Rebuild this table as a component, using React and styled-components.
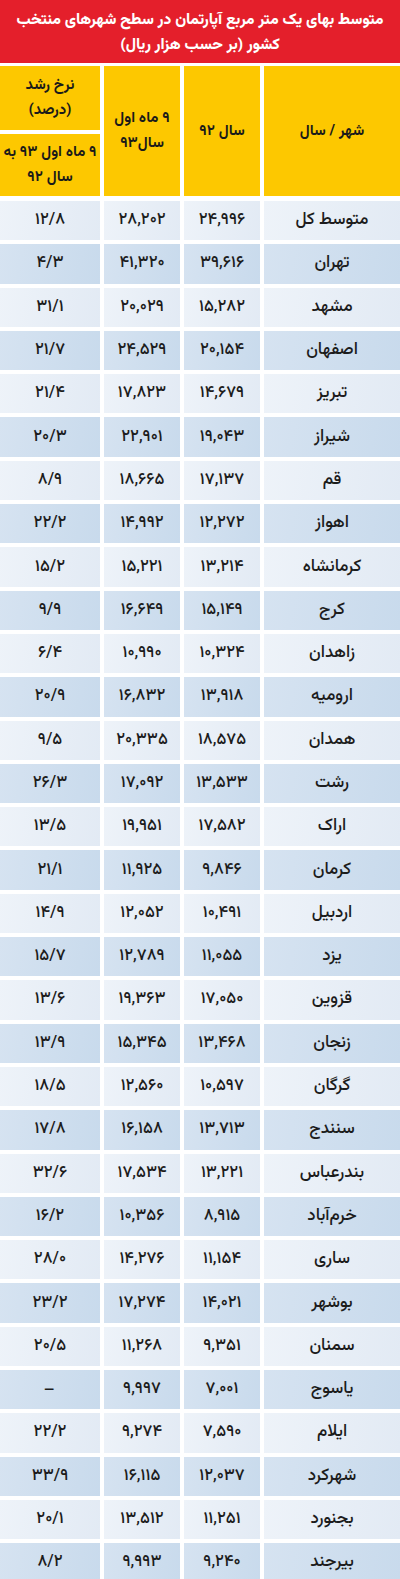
import React from "react";
import styled, { createGlobalStyle } from "styled-components";

const GlobalStyle = createGlobalStyle`
  html, body { margin: 0; padding: 0; background: #ffffff; }
  body { font-family: "Vazirmatn", "Noto Sans Arabic", "DejaVu Sans", sans-serif; }
`;

const toFa = (s) => s.replace(/[0-9]/g, (d) => "۰۱۲۳۴۵۶۷۸۹"[d]);

const rows = [
  ["متوسط کل", "24,996", "28,202", "12/8"],
  ["تهران", "39,616", "41,320", "4/3"],
  ["مشهد", "15,282", "20,029", "31/1"],
  ["اصفهان", "20,154", "24,529", "21/7"],
  ["تبریز", "14,679", "17,823", "21/4"],
  ["شیراز", "19,043", "22,901", "20/3"],
  ["قم", "17,137", "18,665", "8/9"],
  ["اهواز", "12,272", "14,992", "22/2"],
  ["کرمانشاه", "13,214", "15,221", "15/2"],
  ["کرج", "15,149", "16,649", "9/9"],
  ["زاهدان", "10,324", "10,990", "6/4"],
  ["ارومیه", "13,918", "16,832", "20/9"],
  ["همدان", "18,575", "20,335", "9/5"],
  ["رشت", "13,533", "17,092", "26/3"],
  ["اراک", "17,582", "19,951", "13/5"],
  ["کرمان", "9,846", "11,925", "21/1"],
  ["اردبیل", "10,491", "12,052", "14/9"],
  ["یزد", "11,055", "12,789", "15/7"],
  ["قزوین", "17,050", "19,363", "13/6"],
  ["زنجان", "13,468", "15,345", "13/9"],
  ["گرگان", "10,597", "12,560", "18/5"],
  ["سنندج", "13,713", "16,158", "17/8"],
  ["بندرعباس", "13,221", "17,534", "32/6"],
  ["خرم‌آباد", "8,915", "10,356", "16/2"],
  ["ساری", "11,154", "14,276", "28/0"],
  ["بوشهر", "14,021", "17,274", "23/2"],
  ["سمنان", "9,351", "11,268", "20/5"],
  ["یاسوج", "7,001", "9,997", "–"],
  ["ایلام", "7,590", "9,274", "22/2"],
  ["شهرکرد", "12,037", "16,115", "33/9"],
  ["بجنورد", "11,251", "13,512", "20/1"],
  ["بیرجند", "9,240", "9,993", "8/2"],
];

const Page = styled.div`
  width: 400px;
  direction: rtl;
  background: #ffffff;
  display: flex;
  flex-direction: column;
  gap: 3px;
`;

const TitleBar = styled.div`
  height: 63px;
  background: #e41f2b;
  color: #ffffff;
  font-weight: 800;
  font-size: 15.5px;
  line-height: 25px;
  text-align: center;
  white-space: nowrap;
  display: flex;
  flex-direction: column;
  justify-content: center;
  padding-top: 2px;
  box-sizing: border-box;
`;

const Grid = styled.div`
  display: grid;
  grid-template-columns: 136px 76px 76px 100px;
  column-gap: 4px;
`;

const Header = styled(Grid)`
  grid-template-rows: 64px 62px;
  row-gap: 4px;
  margin-bottom: 2px;
`;

const HeadCell = styled.div`
  background: #fdc800;
  color: #1a1a1a;
  font-weight: 700;
  font-size: 15px;
  line-height: 25px;
  text-align: center;
  white-space: nowrap;
  display: flex;
  align-items: center;
  justify-content: center;
  grid-row: ${(p) => (p.$span ? "1 / span 2" : "auto")};
  grid-column: ${(p) => p.$col || "auto"};
`;

const Body = styled(Grid)`
  grid-auto-rows: 39.3px;
  row-gap: 4px;
`;

const Cell = styled.div`
  display: flex;
  align-items: center;
  justify-content: center;
  color: #1c1c1c;
  font-size: ${(p) => (p.$num ? "16.5px" : "17px")};
  font-weight: 500;
  letter-spacing: ${(p) => (p.$num ? "1.8px" : "0")};
  background: ${(p) =>
    p.$dark
      ? "linear-gradient(100deg, #d6e3f1 0%, #c8daec 100%)"
      : "linear-gradient(100deg, #eef3f9 0%, #e2eaf4 100%)"};
  padding-bottom: 1px;
  box-sizing: border-box;
`;

const Num = styled.span`
  direction: ltr;
  unicode-bidi: isolate;
`;

export default function App() {
  return (
    <>
      <GlobalStyle />
      <Page>
        <TitleBar>
          <div>متوسط بهای یک متر مربع آپارتمان در سطح شهرهای منتخب</div>
          <div>کشور (بر حسب هزار ریال)</div>
        </TitleBar>
        <Header>
          <HeadCell $span>شهر / سال</HeadCell>
          <HeadCell $span>سال ۹۲</HeadCell>
          <HeadCell $span>
            ۹ ماه اول
            <br />
            سال۹۳
          </HeadCell>
          <HeadCell $col={4}>
            نرخ رشد
            <br />
            (درصد)
          </HeadCell>
          <HeadCell $col={4}>
            ۹ ماه اول ۹۳ به
            <br />
            سال ۹۲
          </HeadCell>
        </Header>
        <Body>
          {rows.map((r, i) => {
            const dark = i % 2 === 1;
            return (
              <React.Fragment key={r[0]}>
                <Cell $dark={dark}>{r[0]}</Cell>
                <Cell $dark={dark} $num>
                  <Num>{toFa(r[1])}</Num>
                </Cell>
                <Cell $dark={dark} $num>
                  <Num>{toFa(r[2])}</Num>
                </Cell>
                <Cell $dark={dark} $num>
                  <Num>{toFa(r[3])}</Num>
                </Cell>
              </React.Fragment>
            );
          })}
        </Body>
      </Page>
    </>
  );
}
